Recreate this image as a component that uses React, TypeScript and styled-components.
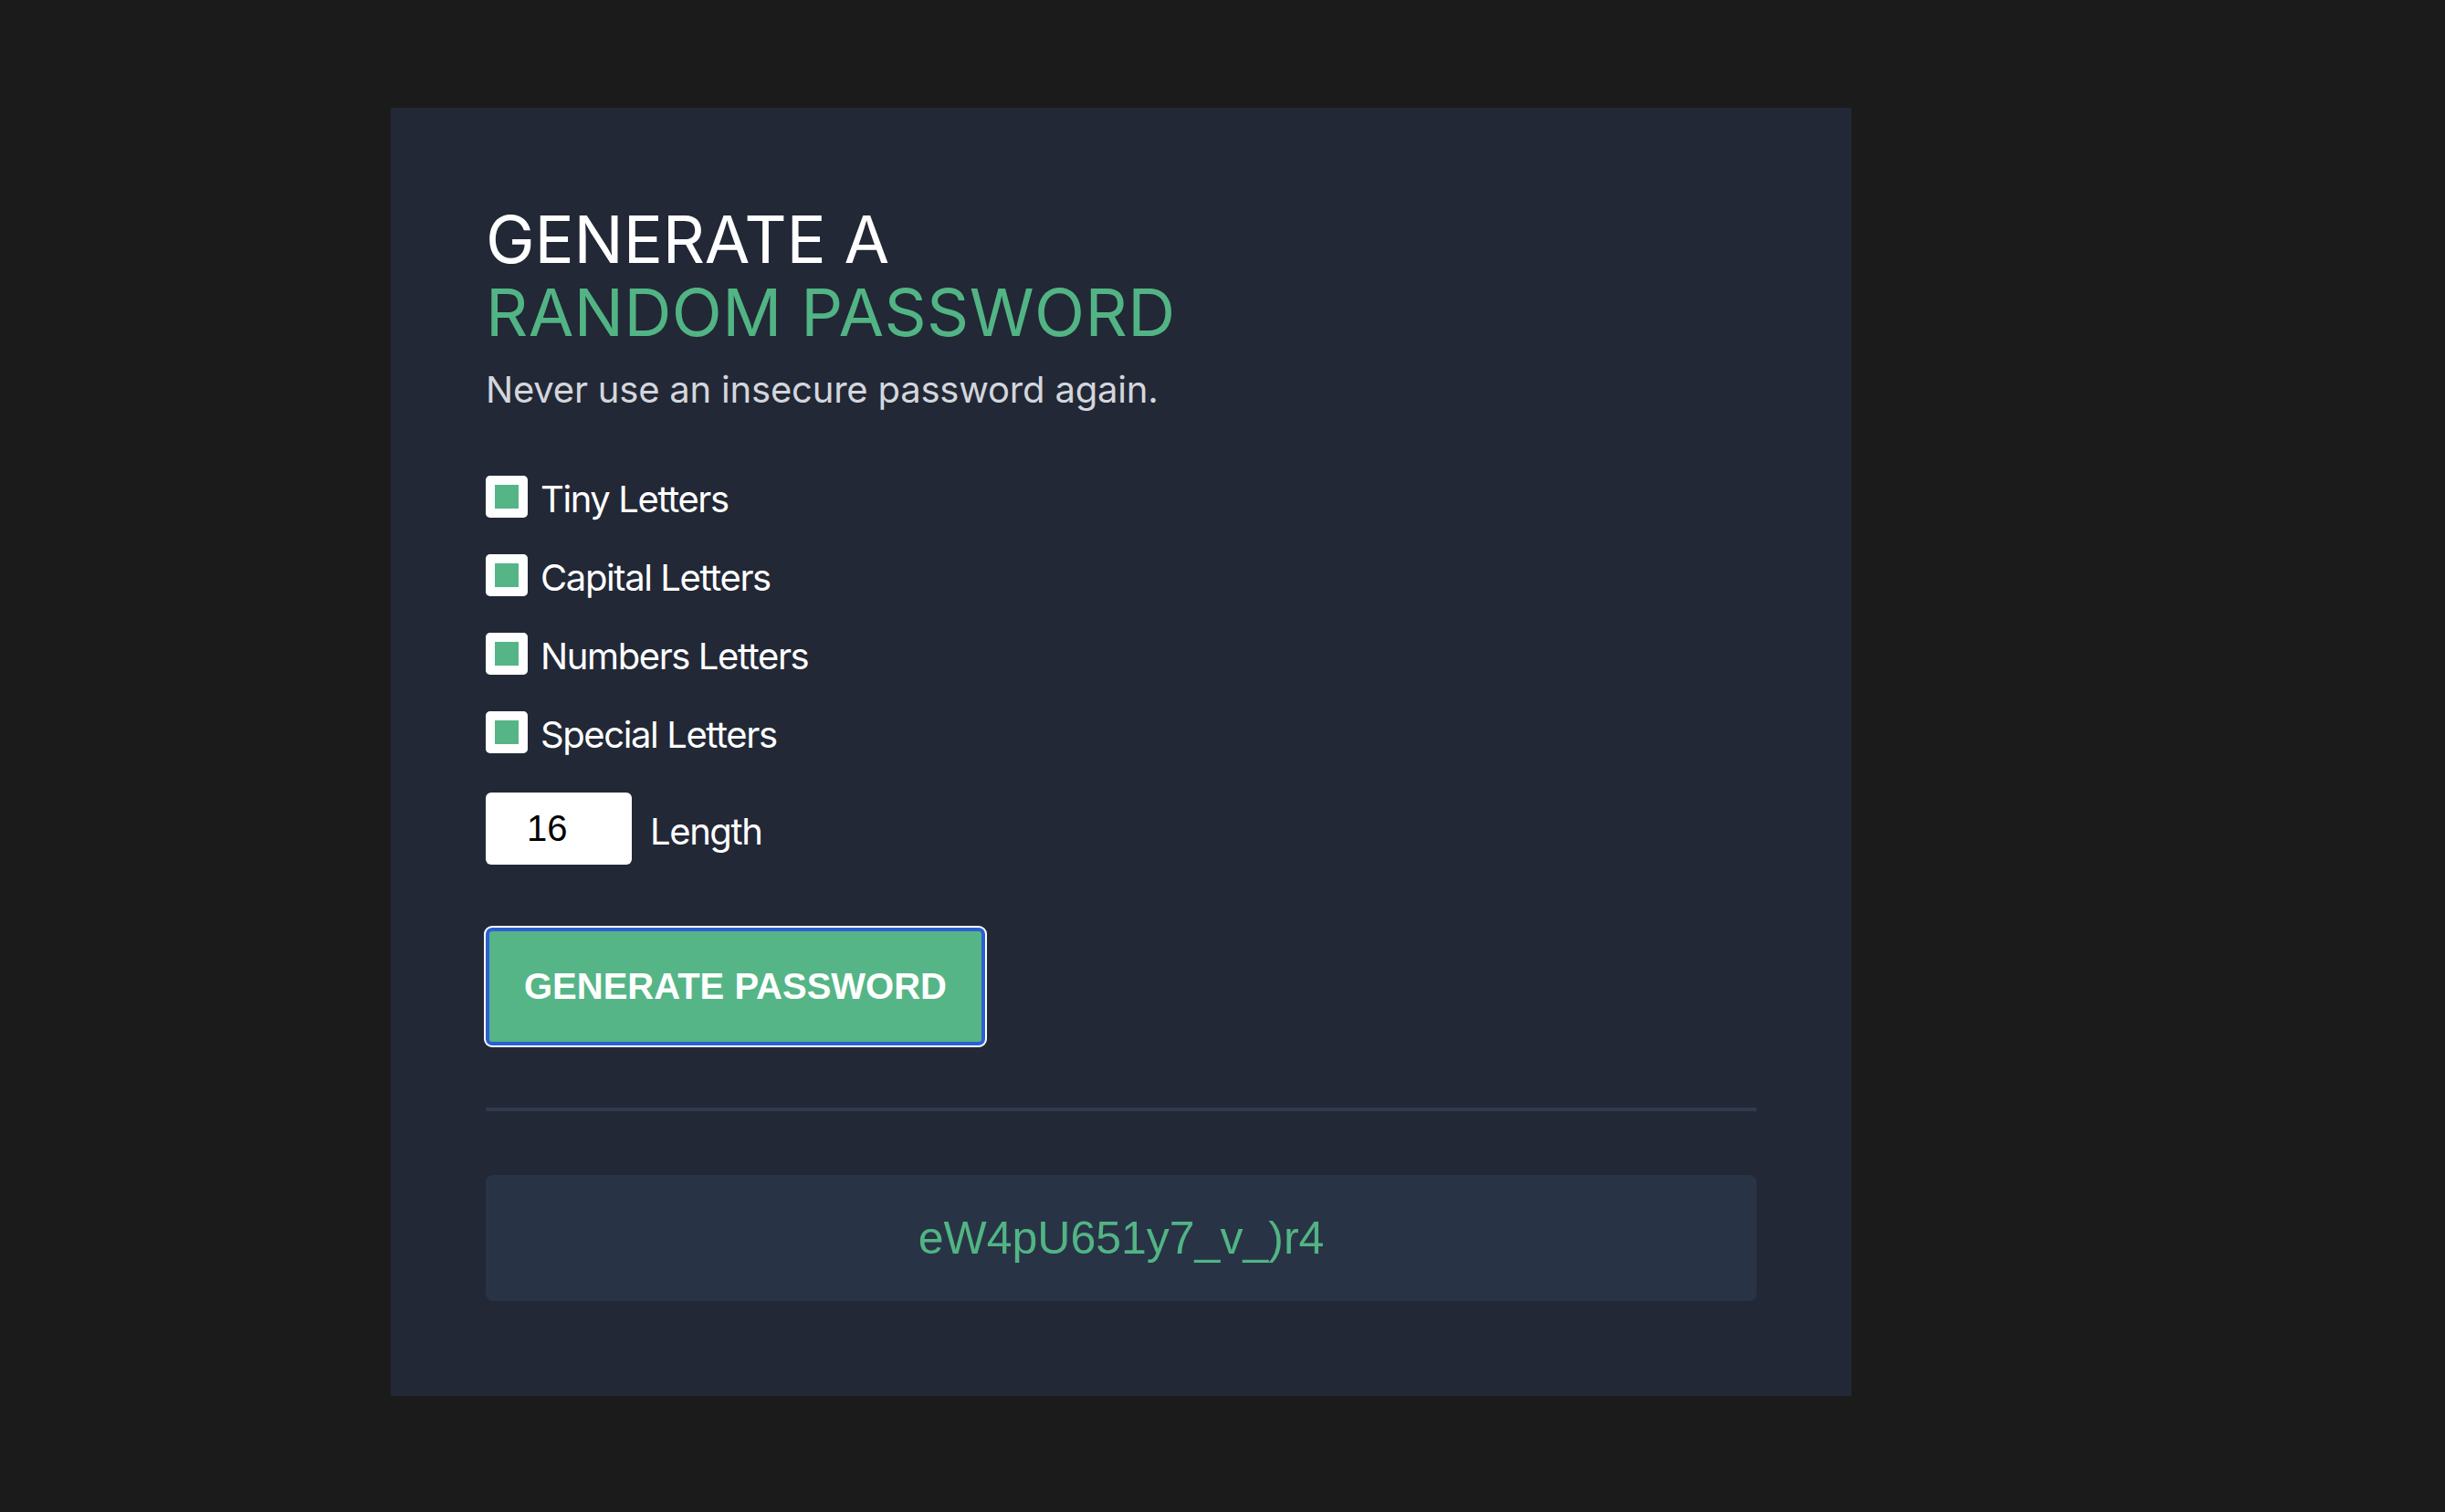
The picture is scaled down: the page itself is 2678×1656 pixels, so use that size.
import * as React from 'react'
import styled, { createGlobalStyle } from 'styled-components'

const GlobalStyle = createGlobalStyle`
  html, body {
    margin: 0;
    padding: 0;
    background: #1b1b1b;
  }
  * {
    box-sizing: border-box;
  }
`

const Page = styled.div`
  min-height: 100vh;
  padding: 118px 0 0 428px;
  background: #1b1b1b;
`

const Card = styled.main`
  width: 1600px;
  padding: 104px;
  background: #222836;
  display: flex;
  flex-direction: column;
`

const Title = styled.h1`
  margin: 0;
  font-family: Inter, 'Noto Sans', sans-serif;
  font-size: 72px;
  font-weight: 400;
  line-height: 80px;
  letter-spacing: -0.2px;
  color: #ffffff;

  span {
    display: block;
    letter-spacing: 0.4px;
    color: #52b484;
  }
`

const Subtitle = styled.p`
  margin: 15px 0 0;
  font-family: Inter, 'Noto Sans', sans-serif;
  font-size: 40px;
  line-height: 60px;
  letter-spacing: -0.2px;
  color: #d4d6dc;
`

const Options = styled.div`
  margin-top: 64px;
  display: flex;
  flex-direction: column;
  gap: 40px;
`

const Option = styled.label`
  display: flex;
  align-items: center;
  gap: 14px;
  height: 46px;
  font-family: Inter, 'Noto Sans', sans-serif;
  font-size: 40px;
  letter-spacing: -1.4px;
  color: #ffffff;
  cursor: pointer;
`

const LabelText = styled.span`
  padding-top: 5px;
`

const Check = styled.input.attrs({ type: 'checkbox' })`
  appearance: none;
  margin: 0;
  width: 46px;
  height: 46px;
  border-radius: 5px;
  background: #ffffff;
  cursor: pointer;

  &:checked {
    background: #55b586;
    box-shadow: inset 0 0 0 10px #ffffff;
  }
`

const LengthRow = styled.label`
  margin-top: 43px;
  display: flex;
  align-items: center;
  gap: 20px;
  font-family: Inter, 'Noto Sans', sans-serif;
  font-size: 40px;
  letter-spacing: -1.4px;
  color: #ffffff;
`

const LengthInput = styled.input`
  width: 160px;
  height: 79px;
  padding: 0 0 0 45px;
  border: none;
  border-radius: 6px;
  background: #ffffff;
  font-family: 'Liberation Sans', Arial, sans-serif;
  font-size: 40px;
  letter-spacing: 0;
  color: #000000;
  outline: none;
`

const GenerateButton = styled.button`
  margin-top: 69px;
  align-self: flex-start;
  height: 129px;
  padding: 0 38px;
  border: 4px solid #2c60d2;
  border-radius: 7px;
  box-shadow: 0 0 0 2px #ffffff;
  background: #55b586;
  font-family: 'Liberation Sans', Arial, sans-serif;
  font-size: 40px;
  font-weight: 700;
  color: #ffffff;
  cursor: pointer;
`

const Divider = styled.hr`
  margin: 68px 0 0;
  height: 4px;
  border: none;
  background: #2f3a4f;
`

const Result = styled.div`
  margin-top: 70px;
  height: 138px;
  border-radius: 8px;
  background: #283446;
  display: flex;
  align-items: center;
  justify-content: center;
  font-family: 'Liberation Sans', Arial, sans-serif;
  font-size: 50px;
  color: #52b484;
`

const options = ['Tiny Letters', 'Capital Letters', 'Numbers Letters', 'Special Letters']

export default function App() {
  const [checked, setChecked] = React.useState([true, true, true, true])
  const [length, setLength] = React.useState('16')

  return (
    <Page>
      <GlobalStyle />
      <Card>
        <Title>
          GENERATE A<span>RANDOM PASSWORD</span>
        </Title>
        <Subtitle>Never use an insecure password again.</Subtitle>
        <Options>
          {options.map((name, i) => (
            <Option key={name}>
              <Check
                checked={checked[i]}
                onChange={() => setChecked(c => c.map((v, j) => (j === i ? !v : v)))}
              />
              <LabelText>{name}</LabelText>
            </Option>
          ))}
        </Options>
        <LengthRow>
          <LengthInput value={length} onChange={e => setLength(e.target.value)} />
          <LabelText>Length</LabelText>
        </LengthRow>
        <GenerateButton>GENERATE PASSWORD</GenerateButton>
        <Divider />
        <Result>eW4pU651y7_v_)r4</Result>
      </Card>
    </Page>
  )
}
